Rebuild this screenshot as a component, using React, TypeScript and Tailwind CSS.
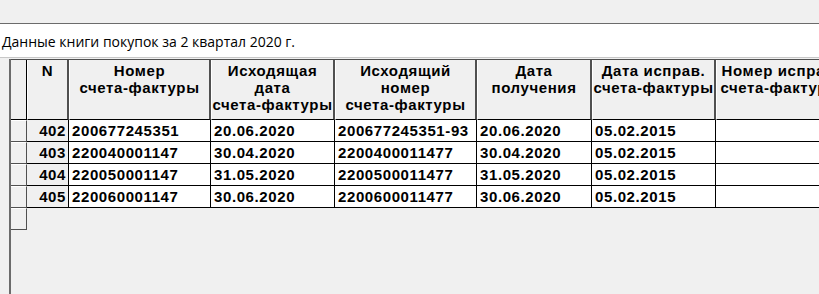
import React from 'react';

const headers = [
  '',
  'N',
  'Номер\nсчета-фактуры',
  'Исходящая\nдата\nсчета-фактуры',
  'Исходящий\nномер\nсчета-фактуры',
  'Дата\nполучения',
  'Дата исправ.\nсчета-фактуры',
  'Номер исправ.\nсчета-фактуры',
];

const rows = [
  ['402', '200677245351', '20.06.2020', '200677245351-93', '20.06.2020', '05.02.2015', ''],
  ['403', '220040001147', '30.04.2020', '2200400011477', '30.04.2020', '05.02.2015', ''],
  ['404', '220050001147', '31.05.2020', '2200500011477', '31.05.2020', '05.02.2015', ''],
  ['405', '220060001147', '30.06.2020', '2200600011477', '30.06.2020', '05.02.2015', ''],
];

const gridCols = 'grid-cols-[16px_42px_142px_124px_142px_115px_124px_130px]';

function App() {
  return (
    <div
      className="w-[819px] h-[294px] overflow-hidden bg-[#f0f0f0] text-black"
      style={{ fontFamily: '"Liberation Sans", Arial, sans-serif' }}
    >
      {/* top strip */}
      <div className="h-[24px] border-b border-[#6b6b6b]" />

      {/* title band */}
      <div
        className="h-[34px] bg-white border-b border-[#c8c8c8] flex items-center pl-[2px] pt-[2px] text-[14px]"
        style={{ fontFamily: '"Open Sans", "Noto Sans", sans-serif' }}
      >
        Данные книги покупок за 2 квартал 2020 г.
      </div>

      {/* grid */}
      <div className="ml-[9px] mt-[1px] h-[300px] border-l-2 border-[#6b6b6b] text-[15px] font-bold tracking-[0.6px]">
        <div className={`grid ${gridCols} border-t border-[#505050] w-max`}>
          {headers.map((h, i) => (
            <div
              key={i}
              className={`h-[60px] bg-[#f0f0f0] border-b border-black whitespace-pre text-center leading-[17px] pt-[2px] ${
                i === 0 ? 'border-r border-[#505050]' : 'border-r-2 border-r-[#505050] border-l border-l-white'
              }`}
            >
              {h}
            </div>
          ))}
          {rows.map((r, ri) => (
            <React.Fragment key={ri}>
              <div className="h-[22px] bg-[#f0f0f0] border-r border-b border-[#505050] border-t border-t-white" />
              {r.map((c, ci) => (
                <div
                  key={ci}
                  className={`h-[22px] flex items-center border-b border-r border-black leading-none ${
                    ci === 0 ? 'bg-[#f0f0f0] justify-end pr-[2px]' : 'bg-white pl-[3px]'
                  }`}
                >
                  {c}
                </div>
              ))}
            </React.Fragment>
          ))}
          <div className="h-[22px] bg-[#f0f0f0] border-r border-b border-[#505050] border-t border-t-white" />
        </div>
      </div>
    </div>
  );
}

export default App;
